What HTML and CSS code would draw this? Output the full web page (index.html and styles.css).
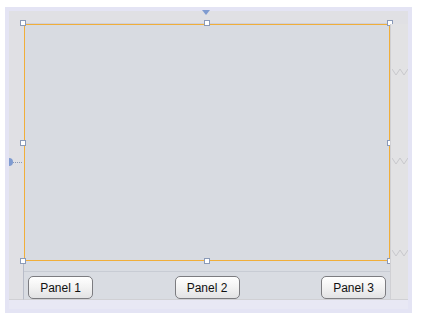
FILE: index.html
```html
<!DOCTYPE html>
<html lang="en">
<head>
  <meta charset="UTF-8" />
  <title>Panel Layout Designer</title>
  <link rel="stylesheet" href="styles.css">
</head>
<body>
  <div class="frame">
    <div class="grid">
      <div class="corner"></div>
      <div class="top-strip"></div>
      <div class="corner"></div>

      <div class="left-strip"></div>
      <div class="canvas">
        <span class="handle h-tl"></span>
        <span class="handle h-tc"></span>
        <span class="handle h-tr"></span>
        <span class="handle h-ml"></span>
        <span class="handle h-mr"></span>
        <span class="handle h-bl"></span>
        <span class="handle h-bc"></span>
        <span class="handle h-br"></span>
      </div>
      <div class="right-strip">
        <svg class="zig z1" width="16" height="10" viewBox="0 0 16 10"><polyline points="0,2 4,8 8,2 12,8 16,2" fill="none" stroke="#c8c8cc" stroke-width="1"/></svg>
        <svg class="zig z2" width="16" height="10" viewBox="0 0 16 10"><polyline points="0,2 4,8 8,2 12,8 16,2" fill="none" stroke="#c8c8cc" stroke-width="1"/></svg>
        <svg class="zig z3" width="16" height="10" viewBox="0 0 16 10"><polyline points="0,2 4,8 8,2 12,8 16,2" fill="none" stroke="#c8c8cc" stroke-width="1"/></svg>
      </div>

      <div class="left-strip bottom"></div>
      <div class="button-bar">
        <button class="panel-btn">Panel 1</button>
        <button class="panel-btn">Panel 2</button>
        <button class="panel-btn">Panel 3</button>
      </div>
      <div class="right-strip bottom"></div>
    </div>
    <span class="marker-top"></span>
    <span class="marker-left"></span>
    <span class="marker-dots"></span>
  </div>
</body>
</html>
```

FILE: styles.css
```css
* {
  box-sizing: border-box;
  margin: 0;
  padding: 0;
}
body {
  background: #ffffff;
  font-family: 'Liberation Sans', Arial, sans-serif;
}
.frame {
  position: relative;
  margin: 7px 0 0 5px;
  width: 407px;
  height: 306px;
  border: 4px solid #e4e4f4;
  background: #e8e8f4;
}
.grid {
  display: grid;
  grid-template-columns: 15px 366px 18px;
  grid-template-rows: 13px 237px 39px;
  background: #d9dce2;
}
.corner {
  background: #e0e0e4;
}
.top-strip {
  background: #e0e0e4;
  border-bottom: 1px solid #d0d0d8;
}
.left-strip {
  background: #e0e0e4;
}
.left-strip.bottom {
  border-right: 1px solid #b8bcc8;
  border-bottom: 1px solid #d0d0d4;
}
.right-strip {
  position: relative;
  background: #e2e2e4;
  border-left: 1px solid #d0d0d4;
}
.right-strip.bottom {
  border-bottom: 1px solid #d0d0d4;
}
.canvas {
  position: relative;
  border: 1px solid #f0ae3a;
  background: #d8dbe1;
}
.handle {
  position: absolute;
  width: 6px;
  height: 6px;
  background: #ffffff;
  border: 1px solid #8a9ab8;
}
.h-tl { left: -5px; top: -5px; }
.h-tc { left: 179px; top: -5px; }
.h-tr { right: -4px; top: -5px; }
.h-ml { left: -5px; top: 115px; }
.h-mr { right: -4px; top: 115px; }
.h-bl { left: -5px; bottom: -4px; }
.h-bc { left: 179px; bottom: -4px; }
.h-br { right: -4px; bottom: -4px; }
.zig {
  position: absolute;
  left: 1px;
}
.z1 { top: 43px; }
.z2 { top: 132px; }
.z3 { top: 224px; }
.button-bar {
  display: flex;
  justify-content: space-between;
  align-items: flex-start;
  margin-top: 10px;
  padding: 4px 4px 0;
  border-top: 1px solid #c8ccd4;
  border-bottom: 1px solid #d0d0d4;
}
.panel-btn {
  width: 65px;
  height: 23px;
  border: 1px solid #7c7c80;
  border-radius: 5px;
  background: linear-gradient(#ffffff, #f2f2f2 50%, #e2e2e4);
  font-family: 'Liberation Sans', Arial, sans-serif;
  font-size: 12px;
  color: #111111;
}
.marker-top {
  position: absolute;
  left: 193px;
  top: -1px;
  width: 0;
  height: 0;
  border-left: 4px solid transparent;
  border-right: 4px solid transparent;
  border-top: 5px solid #7f9bd0;
}
.marker-left {
  position: absolute;
  left: 0;
  top: 147px;
  width: 4px;
  height: 8px;
  border-radius: 0 4px 4px 0;
  background: #7f9bd0;
}
.marker-dots {
  position: absolute;
  left: 4px;
  top: 151px;
  width: 9px;
  border-top: 1px dotted #8a9ab8;
}
```
